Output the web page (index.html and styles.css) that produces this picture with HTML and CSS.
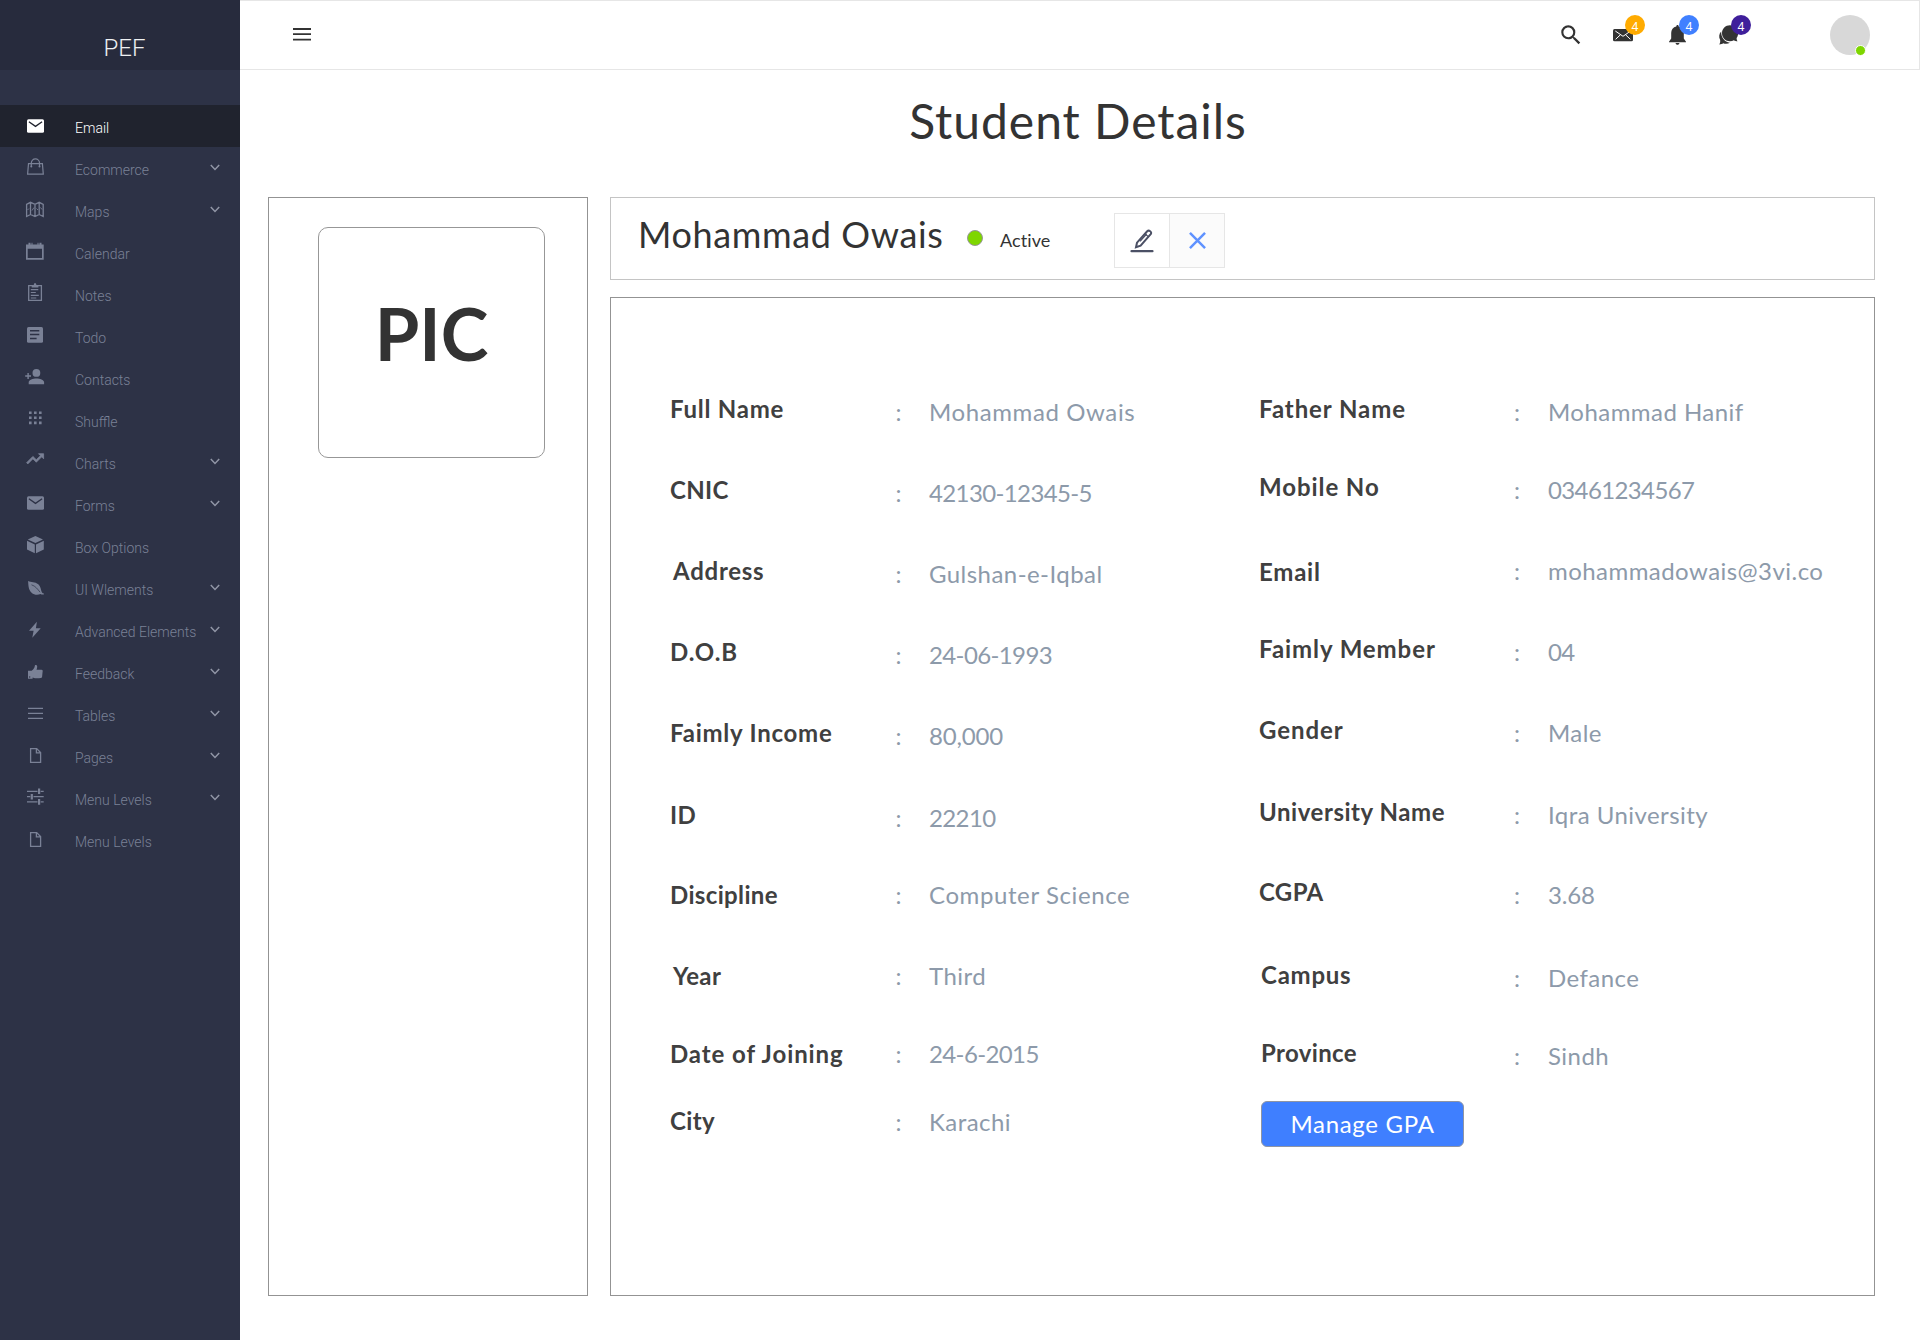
FILE: index.html
```html
<!DOCTYPE html>
<html lang="en">
<head>
<meta charset="utf-8">
<title>Student Details</title>
<link rel="stylesheet" href="styles.css">
</head>
<body>
<svg class="sprite" aria-hidden="true">
  <symbol id="chevron" viewBox="0 0 10 7"><path d="M.8 1 5 5.4 9.200 1" fill="none" stroke="currentColor" stroke-width="1.500"/></symbol>
  <symbol id="mail" viewBox="0 0 24 24"><rect x="4" y="5.300" width="17" height="13.500" rx="1.500" fill="currentColor"/><path class="cut" d="M5.900 7.800 12.500 12.400 19.100 7.800" stroke-width="1.300"/></symbol>
  <symbol id="page" viewBox="0 0 24 24"><path d="M7.600 4.600h6.100l3.900 3.900v9.900h-10zM13.400 4.600v4.200h4.200" fill="none" stroke="currentColor" stroke-width="1.300"/></symbol>
</svg>

<div class="app">
  <aside class="sidebar">
    <div class="brand">PEF</div>
    <nav class="menu">
      <a class="item active"><svg class="icon"><use href="#mail"/></svg><span class="name">Email</span></a>
      <a class="item"><svg class="icon" viewBox="0 0 24 24"><g fill="none" stroke="currentColor" stroke-width="1.200"><path d="M5.500 7.700h13.900l.9 10.500H4.600z"/><path d="M8.300 10.500V7a4 4 0 0 1 8.200 0v3.500"/></g><circle cx="8.300" cy="10.600" r="1"/><circle cx="16.500" cy="10.600" r="1"/></svg><span class="name">Ecommerce</span><svg class="chev"><use href="#chevron"/></svg></a>
      <a class="item"><svg class="icon" viewBox="0 0 24 24"><g fill="none" stroke="currentColor"><path d="M3.600 6.300 7.500 4.300 12 6.300l4.200-2 4 2v12.200l-4-2-4.200 2-4.500-2-3.900 2zM7.500 4.300v12.200M12 6.300v12.200M16.200 4.300v12.200" stroke-width="1.300"/><path d="M4.500 12l1.500-1.500M9 12.500l2-3M13.500 10.500l1.500 1.500M17.500 9.500l1.500 2" stroke-width=".9"/></g></svg><span class="name">Maps</span><svg class="chev"><use href="#chevron"/></svg></a>
      <a class="item"><svg class="icon" viewBox="0 0 24 24"><path d="M3 4.400h2.500V2.700h2v1.700h1v-1.700h1v1.700h5v-1.700h1v1.700h1v-1.700h2v1.700h2.200v15.300H3zM4.700 8.800v9.200h14.300V8.800z" fill-rule="evenodd"/></svg><span class="name">Calendar</span></a>
      <a class="item"><svg class="icon" viewBox="0 0 24 24"><path d="M5.700 3.700h12.700v14.700H5.700z" fill="none" stroke="currentColor" stroke-width="1.300"/><path d="M8.700 3h2l.5-1.700h1.700l.5 1.700h2v2.600H8.700zM7.800 7h7.500v1.200H7.800zM7.800 9.900h5v1.200h-5zM7.800 12.700h8v1.200h-8zM7.800 15.400h5.500v1.200H7.800z"/></svg><span class="name">Notes</span></a>
      <a class="item"><svg class="icon" viewBox="0 0 24 24"><rect x="4" y="3" width="16" height="15.700" rx="1.500"/><path class="cut" d="M7 6.800h9.300M7 10.600h9.300M7 14.400h6.600" stroke-width="1.500"/></svg><span class="name">Todo</span></a>
      <a class="item"><svg class="icon" viewBox="0 0 24 24"><circle cx="13.400" cy="6.900" r="3.900"/><path d="M5.700 18.300v-2c0-2.500 4.300-3.800 7.700-3.800s7.700 1.300 7.700 3.800v2zM4.400 7h1.400v2.300H8v1.400H5.800V13H4.400v-2.300H2.200V9.300h2.200z"/></svg><span class="name">Contacts</span></a>
      <a class="item"><svg class="icon" viewBox="0 0 24 24"><path d="M6 3.400h2.600V6H6zM11 3.400h2.600V6H11zM16 3.400h2.600V6H16zM6 8.400h2.600V11H6zM11 8.400h2.600V11H11zM16 8.400h2.600V11H16zM6 13.600h2.600v2.600H6zM11 13.600h2.600v2.600H11zM16 13.600h2.600v2.600H16z"/></svg><span class="name">Shuffle</span></a>
      <a class="item"><svg class="icon" viewBox="0 0 24 24"><path transform="translate(1.900 -1.400) scale(.85)" d="m16 6 2.290 2.290-4.880 4.880-4-4L2 16.590 3.410 18l6-6 4 4 6.300-6.290L22 12V6z" stroke="currentColor" stroke-width=".9"/></svg><span class="name">Charts</span><svg class="chev"><use href="#chevron"/></svg></a>
      <a class="item"><svg class="icon up"><use href="#mail"/></svg><span class="name">Forms</span><svg class="chev"><use href="#chevron"/></svg></a>
      <a class="item"><svg class="icon" viewBox="0 0 24 24"><path d="M12.400 2 20 5.400l-7.600 3.700L4.800 5.400zM4 6.800l7.800 3.700v8.700L4 15.400zM20.800 6.800 13 10.500v8.700l7.800-3.800z"/></svg><span class="name">Box Options</span></a>
      <a class="item"><svg class="icon" viewBox="0 0 24 24"><path d="M5.100 5c3 1.600 6.900.7 10.200 3.200 2.400 1.900 2.500 5.600 3.500 8 .6.900 1.200 1.100 2 1.200v1.100c-1.500.2-2.500 0-3.300-.6-2.700 1.400-6.400 1-8.900-1.200C5.200 13.600 5.400 8.800 5.100 5z"/><path class="cut" d="M8.500 8.800c4.200 1.400 6 4.300 8.600 7.400" stroke-width=".7"/></svg><span class="name">UI Wlements</span><svg class="chev"><use href="#chevron"/></svg></a>
      <a class="item"><svg class="icon" viewBox="0 0 24 24"><path d="M13.900 3.800 6 12.800h4.600L9.300 19.800l8.400-9.500h-4.800z"/></svg><span class="name">Advanced Elements</span><svg class="chev"><use href="#chevron"/></svg></a>
      <a class="item"><svg class="icon" viewBox="0 0 24 24"><path d="M5 10.700h3.600c1.900-1.200 3-3 3.300-5.300.3-.8 2.100-.5 2.300 1.100.1 1.200-.3 2.300-.7 3.200h5c1.200.1 1.500 1.100 1.100 2l-.5 5c-.2.900-.7 1.300-1.500 1.400-2.800.4-5.700.3-8-.6v1.300H5z"/><circle class="hole" cx="6.700" cy="17" r=".7"/></svg><span class="name">Feedback</span><svg class="chev"><use href="#chevron"/></svg></a>
      <a class="item"><svg class="icon" viewBox="0 0 24 24"><path d="M5 5.700h15v1.300H5zM5 10.700h15v1.300H5zM5 15.700h15v1.300H5z"/></svg><span class="name">Tables</span><svg class="chev"><use href="#chevron"/></svg></a>
      <a class="item"><svg class="icon"><use href="#page"/></svg><span class="name">Pages</span><svg class="chev"><use href="#chevron"/></svg></a>
      <a class="item"><svg class="icon" viewBox="0 0 24 24"><path d="M4 4.700h10.500v1.300H4zM17.700 4.700h3v1.300h-3zM15 2.500h2.200v5.600H15zM4 10h3.200v1.300H4zM10.500 10h10.200v1.300H10.500zM7.700 7.900h2.200v5.600H7.700zM4 15.200h10.500v1.300H4zM17.700 15.200h3v1.300h-3zM15 13h2.200v5.800H15z"/></svg><span class="name">Menu Levels</span><svg class="chev"><use href="#chevron"/></svg></a>
      <a class="item"><svg class="icon"><use href="#page"/></svg><span class="name">Menu Levels</span></a>
    </nav>
  </aside>

  <div class="page">
    <header class="topbar">
      <svg class="burger" viewBox="0 0 18 13"><path d="M0 0h18v2H0zM0 5.200h18v1.700H0zM0 10.800h18v1.800H0z"/></svg>
      <div class="tools">
        <svg class="search" viewBox="0 0 24 24"><path d="M15.500 14h-.79l-.28-.27A6.471 6.471 0 0 0 16 9.500 6.500 6.500 0 1 0 9.500 16c1.610 0 3.090-.59 4.230-1.570l.27.280v.790l5 4.990L20.490 19zm-6 0C7.010 14 5 11.990 5 9.500S7.010 5 9.500 5 14 7.010 14 9.500 11.990 14 9.500 14z"/></svg>
        <div class="alert mails"><svg viewBox="0 0 24 24"><rect x="2" y="6" width="20" height="12.300" rx="1.500"/><path d="M4.300 8 12 13.300 19.700 8M4.600 16.300l4.800-4.500M19.400 16.300l-4.800-4.500" fill="none" stroke="#fff" stroke-width="1"/></svg><span class="badge orange">4</span></div>
        <div class="alert bell"><svg viewBox="0 0 24 24"><path d="M12.500 2c.8 0 1.200.6 1.200 1.500 3.200.6 5.100 3.100 5.100 6.500v5.500l2.200 3.200v.6H4v-.6l2.200-3.200V10c0-3.400 1.900-5.900 5.100-6.500 0-.9.400-1.500 1.200-1.500zM10.500 20h4c-.3 1.200-1 1.800-2 1.800s-1.700-.6-2-1.800z"/></svg><span class="badge blue">4</span></div>
        <div class="alert chat"><svg viewBox="0 0 24 24"><path d="M4.200 8.400C2 10.500 1.600 14 3.100 16.800c.3 1.700.1 3.200-.8 4.600 1.700-.1 3-.4 4-1.200 2 .8 4.700.7 6.600-.5C7.600 19 4 14.300 4.200 8.400z"/><path d="M13 2.300c4.600 0 8.100 3.400 8.100 7.900 0 1.900-.5 3.300-1.500 4.700 0 1.500.4 2.400 1 3.400-1.600 0-2.700-.4-3.700-1-1.200.6-2.500.9-3.900.9-4.500 0-8-3.500-8-8s3.500-7.900 8-7.900z"/></svg><span class="badge purple">4</span></div>
        <div class="avatar"><span class="online"></span></div>
      </div>
    </header>

    <main class="content">
      <h1 class="title">Student Details</h1>
      <div class="columns">
        <section class="photo-panel"><div class="photo">PIC</div></section>
        <div class="profile">
          <section class="summary">
            <h2 class="student">Mohammad Owais</h2>
            <span class="dot"></span>
            <span class="status">Active</span>
            <div class="actions">
              <button class="action edit"><svg viewBox="0 0 24 24"><g fill="none" stroke="#4b5065"><path d="M6 18.200 7 13.700 17.200 2.300c.7-.7 2-.8 3 0 1.100.8 1.200 2 .5 2.900L10.600 16.600z" stroke-width="2"/><path d="M16.600 5 10 12.400M15 4.600l3.200 3" stroke-width="1.300"/><path d="M1.500 22.200h21" stroke-width="2.200" stroke-linecap="round"/></g></svg></button>
              <button class="action close"><svg viewBox="0 0 18 18"><path d="M1 1l16 16M17 1 1 17" stroke="#5f92ff" stroke-width="2.600" fill="none"/></svg></button>
            </div>
          </section>
          <section class="details">
            <div class="fields left">
              <div class="field"><span class="label">Full Name</span><span class="colon">:</span><span class="value wide">Mohammad Owais</span></div>
              <div class="field"><span class="label tight">CNIC</span><span class="colon">:</span><span class="value num">42130-12345-5</span></div>
              <div class="field"><span class="label inset">Address</span><span class="colon">:</span><span class="value">Gulshan-e-Iqbal</span></div>
              <div class="field"><span class="label loose">D.O.B</span><span class="colon">:</span><span class="value num">24-06-1993</span></div>
              <div class="field h82"><span class="label">Faimly Income</span><span class="colon">:</span><span class="value figure">80,000</span></div>
              <div class="field h77"><span class="label tight">ID</span><span class="colon">:</span><span class="value num">22210</span></div>
              <div class="field level"><span class="label tight">Discipline</span><span class="colon">:</span><span class="value wide">Computer Science</span></div>
              <div class="field level h78"><span class="label tight inset">Year</span><span class="colon">:</span><span class="value">Third</span></div>
              <div class="field level h68"><span class="label loose">Date of Joining</span><span class="colon">:</span><span class="value num">24-6-2015</span></div>
              <div class="field near"><span class="label tight">City</span><span class="colon">:</span><span class="value">Karachi</span></div>
            </div>
            <div class="fields right">
              <div class="field h78"><span class="label loose">Father Name</span><span class="colon">:</span><span class="value">Mohammad Hanif</span></div>
              <div class="field"><span class="label loose">Mobile No</span><span class="colon">:</span><span class="value num">03461234567</span></div>
              <div class="field below"><span class="label">Email</span><span class="colon">:</span><span class="value">mohammadowais@3vi.co</span></div>
              <div class="field"><span class="label loose">Faimly Member</span><span class="colon">:</span><span class="value num">04</span></div>
              <div class="field h82"><span class="label loose">Gender</span><span class="colon">:</span><span class="value">Male</span></div>
              <div class="field h80"><span class="label even">University Name</span><span class="colon">:</span><span class="value">Iqra University</span></div>
              <div class="field h83"><span class="label tight">CGPA</span><span class="colon">:</span><span class="value figure">3.68</span></div>
              <div class="field h78"><span class="label nudge">Campus</span><span class="colon">:</span><span class="value">Defance</span></div>
              <div class="field h63"><span class="label tight nudge">Province</span><span class="colon">:</span><span class="value">Sindh</span></div>
              <button class="manage">Manage GPA</button>
            </div>
          </section>
        </div>
      </div>
    </main>
  </div>
</div>
</body>
</html>
```
FILE: styles.css
```css
* { box-sizing: border-box; }
body { margin: 0; background: #fff; color: #333; font-family: Lato, "Open Sans", sans-serif; }
h1, h2 { margin: 0; font-weight: 400; }
button { font: inherit; margin: 0; padding: 0; cursor: pointer; }
.sprite { position: absolute; width: 0; height: 0; }

.app { display: flex; width: 1920px; height: 1340px; overflow: hidden; }

/* Sidebar */
.sidebar { width: 240px; flex: none; background: #2d3246; font-family: Roboto, sans-serif; font-weight: 300; --cut: #2d3246; }
.brand { height: 70px; padding: 34px 0 0 103.500px; background: #272b3d; color: #eef0f2; font-size: 24px; line-height: 28px; }
.menu { padding-top: 35px; }
.item { display: flex; height: 42px; padding: 0 20px 0 23px; color: #7a8196; font-size: 14px; line-height: 16px; }
.item.active { background: #20232e; color: #fff; --cut: #20232e; }
.icon { width: 24px; height: 24px; margin: 9px 28px 0 0; flex: none; fill: currentColor; }
.icon.up { margin-top: 8px; }
.name { flex: 1; padding-top: 15px; white-space: nowrap; }
.chev { width: 10px; height: 7px; margin-top: 17px; flex: none; color: #9196a6; }
.cut { fill: none; stroke: var(--cut); }
.hole { fill: var(--cut); }

/* Top bar */
.page { flex: 1; display: flex; flex-direction: column; }
.topbar { display: flex; align-items: center; justify-content: space-between; height: 70px; padding: 0 49px 0 53px; border: solid #e6e6e6; border-width: 1px 1px 1px 0; }
.burger { width: 18px; height: 13px; margin-bottom: 1px; fill: #333; }
.tools { display: flex; align-items: center; fill: #333; }
.search { width: 26px; height: 26px; margin-right: 27px; }
.alert { position: relative; width: 24px; height: 24px; }
.alert svg { display: block; width: 24px; height: 24px; }
.mails { margin-right: 30px; }
.bell { margin-right: 28px; }
.chat { margin-right: 89px; }
.badge { position: absolute; left: 14px; top: -8px; width: 20px; height: 20px; border-radius: 50%; color: #fff; font: 400 12px/24px "Noto Sans", sans-serif; text-align: center; }
.orange { background: #ffab00; }
.blue { background: #4080ff; }
.purple { background: #3f1f9b; }
.avatar { position: relative; width: 40px; height: 40px; border-radius: 50%; background: #d8d8d8; }
.online { position: absolute; left: 25px; top: 30px; width: 11px; height: 11px; border: 1px solid #fff; border-radius: 50%; background: #7ed600; }

/* Content */
.content { padding: 0 45px 0 28px; }
.title { height: 127px; padding: 22px 4px 0 0; margin-right: -17px; font-size: 48px; line-height: 58px; letter-spacing: .97px; text-align: center; }
.columns { display: flex; gap: 22px; height: 1099px; }
.photo-panel { width: 320px; padding: 29px 42px 0 49px; border: 1px solid #939393; }
.photo { height: 231px; padding-top: 62px; border: 1px solid #979797; border-radius: 10px; font-size: 72px; line-height: 86px; font-weight: 700; text-align: center; }
.profile { flex: 1; display: flex; flex-direction: column; gap: 17px; }

.summary { display: grid; grid-template-columns: 329px 33px 114px auto; justify-content: start; height: 83px; padding-left: 27px; border: 1px solid #c4c4c4; }
.student { margin-top: 14px; font-size: 36px; line-height: 44px; letter-spacing: .62px; white-space: nowrap; }
.dot { width: 16px; height: 16px; margin-top: 32px; border: 1px solid #979797; border-radius: 50%; background: #7ed600; }
.status { margin-top: 31px; font-size: 18px; line-height: 22px; letter-spacing: .1px; }
.actions { display: flex; width: 111px; height: 55px; margin-top: 15px; border: 1.500px solid #e6e6e6; }
.action { display: flex; align-items: center; justify-content: center; flex: 1; border: 0; background: #fff; }
.close { border-left: 1px solid #e6e6e6; background: #fbfbfb; }
.edit svg { width: 24px; height: 24px; }
.close svg { width: 17px; height: 17px; }

.details { flex: 1; display: grid; grid-template-columns: 589px 1fr; padding: 96px 0 0 59px; border: 1px solid #939393; }
.field { display: grid; grid-template-columns: 225.500px 33.500px 1fr; height: 81px; font-size: 24px; line-height: 30px; white-space: nowrap; }
.right .field { grid-template-columns: 255px 34px 1fr; }
.h63 { height: 63px; }
.h68 { height: 68px; }
.h77 { height: 77px; }
.h78 { height: 78px; }
.h80 { height: 80px; }
.right .h82, .h82 { height: 82px; }
.h83 { height: 83px; }
.label { color: #404040; font-weight: 700; letter-spacing: .75px; }
.label.even { letter-spacing: .55px; }
.label.tight { letter-spacing: .35px; }
.label.loose { letter-spacing: .92px; }
.label.inset { padding-left: 3px; }
.label.nudge { padding-left: 2px; }
.near .label { padding-top: 2px; }
.level .label, .colon, .value { padding-top: 3px; }
.below .label { padding-top: 4px; }
.colon, .value { color: #8d9aaa; letter-spacing: .45px; }
.value.wide { letter-spacing: .6px; }
.value.num { letter-spacing: -.62px; }
.value.figure { letter-spacing: -.2px; }
.manage { width: 203px; height: 46px; margin-left: 2px; border: 1px solid #8f95a3; border-radius: 6px; background: #3f7fff; color: #fff; font-size: 24px; line-height: 30px; letter-spacing: .69px; }
```
